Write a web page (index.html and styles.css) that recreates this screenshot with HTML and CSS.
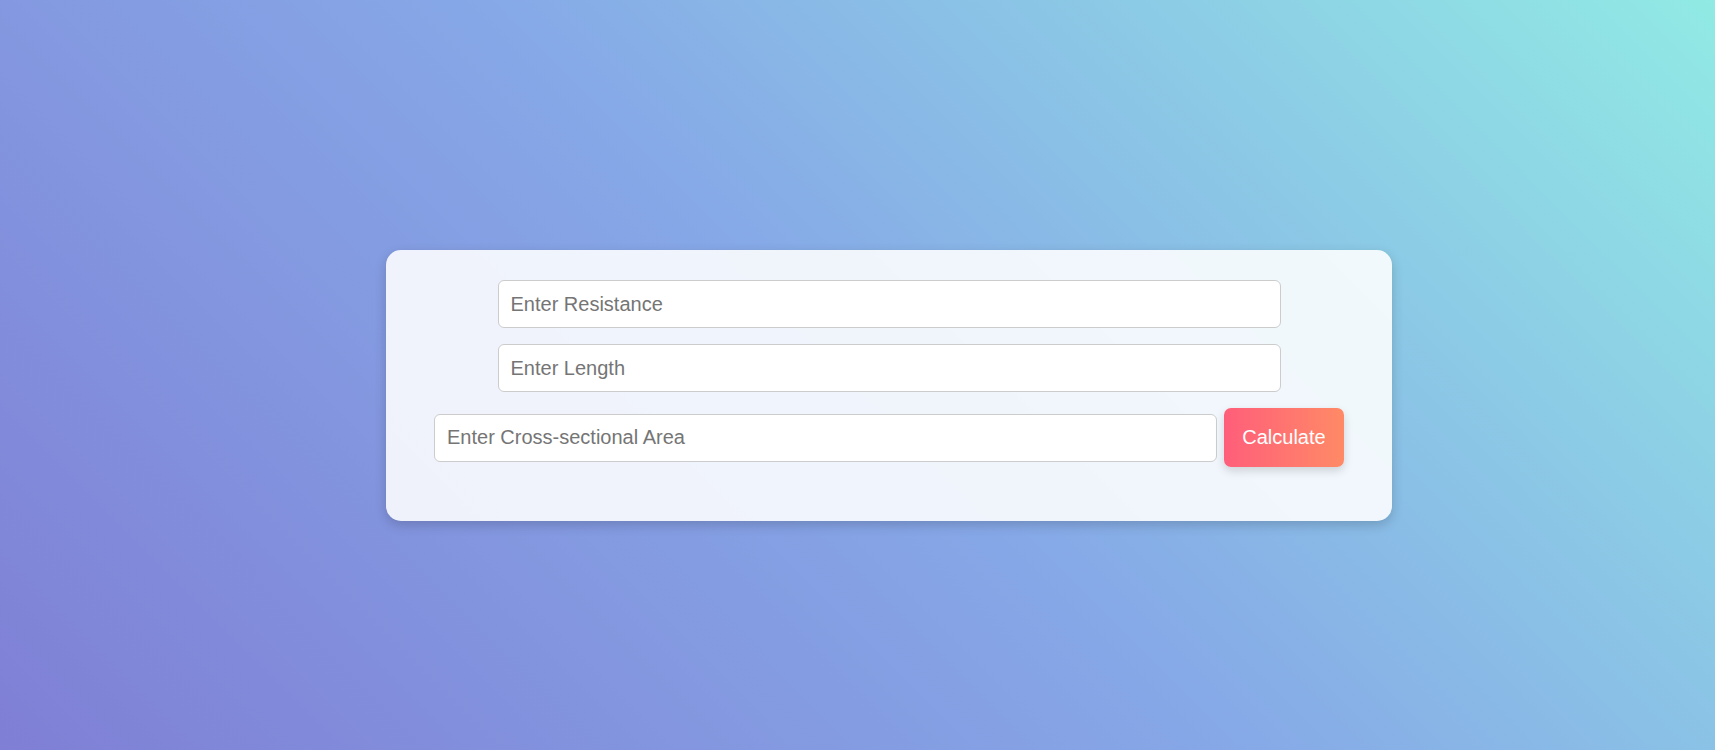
FILE: index.html
```html
<!DOCTYPE html>
<html lang="en">
<head>
<meta charset="utf-8">
<title>Resistivity Calculator</title>
<link rel="stylesheet" href="styles.css">
</head>
<body>
<main class="page">
  <section class="card">
    <input class="field" type="text" placeholder="Enter Resistance">
    <input class="field" type="text" placeholder="Enter Length">
    <div class="row">
      <input class="field" type="text" placeholder="Enter Cross-sectional Area">
      <button class="btn" type="button">Calculate</button>
    </div>
  </section>
</main>
</body>
</html>
```
FILE: styles.css
```css
html, body {
  margin: 0;
  height: 100%;
}
body {
  font-family: "Liberation Sans", Arial, sans-serif;
  background: linear-gradient(45deg, #7f7fd5, #86a8e7, #91eae4);
}
.page {
  box-sizing: border-box;
  height: 100vh;
  display: flex;
  justify-content: center;
  align-items: center;
  padding-left: 63px;
  padding-top: 21px;
}
.card {
  box-sizing: border-box;
  width: 1006px;
  padding: 30px 48px 54px;
  background: rgba(255, 255, 255, 0.88);
  border-radius: 15px;
  box-shadow: 0 4px 12px rgba(0, 0, 0, 0.18);
  display: flex;
  flex-direction: column;
  align-items: center;
  gap: 16px;
}
.field {
  box-sizing: border-box;
  width: 783px;
  height: 48px;
  padding: 0 12px;
  font-family: "Liberation Sans", Arial, sans-serif;
  font-size: 20px;
  color: #333;
  background: #fff;
  border: 1px solid #ccc;
  border-radius: 6px;
  outline: none;
}
.field::placeholder {
  color: #757575;
}
.row {
  display: flex;
  align-items: center;
  gap: 7px;
}
.btn {
  box-sizing: border-box;
  width: 120px;
  height: 59px;
  padding: 0;
  font-family: "Liberation Sans", Arial, sans-serif;
  font-size: 20px;
  color: #fff;
  border: none;
  border-radius: 7px;
  background: linear-gradient(to right, #ff5e7a, #ff8a66);
  box-shadow: 0 4px 10px rgba(0, 0, 0, 0.15);
  cursor: pointer;
}
```
